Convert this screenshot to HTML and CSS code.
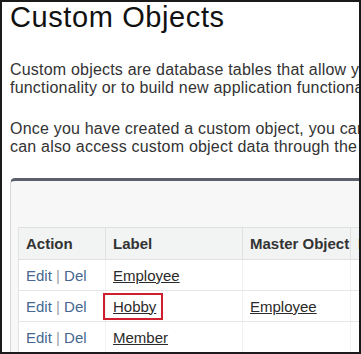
FILE: index.html
```html
<!DOCTYPE html>
<html lang="en">
<head>
  <meta charset="UTF-8">
  <title>Custom Objects</title>
  <link rel="stylesheet" href="styles.css">
</head>
<body>

  <!-- Page frame -->
  <div class="frame">
    <h1 class="page-title">Custom Objects</h1>

    <p class="intro">Custom objects are database tables that allow you to store information unique to your organization. Use them to extend existing<br>functionality or to build new application functionality.</p>
    <p class="intro intro-second">Once you have created a custom object, you can create a tab, custom fields and relationships for it. You<br>can also access custom object data through the API.</p>

    <!-- Object list -->
    <div class="list-box">
      <table class="list-table">
        <thead>
          <tr>
            <th class="col-action">Action</th>
            <th class="col-label">Label</th>
            <th class="col-master">Master Object</th>
            <th>Deployment Status</th>
          </tr>
        </thead>
        <tbody>
          <tr>
            <td><a href="#" class="action-link">Edit</a> <span class="sep">|</span> <a href="#" class="action-link">Del</a></td>
            <td><a href="#" class="obj-link">Employee</a></td>
            <td></td>
            <td></td>
          </tr>
          <tr>
            <td><a href="#" class="action-link">Edit</a> <span class="sep">|</span> <a href="#" class="action-link">Del</a></td>
            <td><span class="highlight"><a href="#" class="obj-link">Hobby</a></span></td>
            <td><a href="#" class="obj-link">Employee</a></td>
            <td></td>
          </tr>
          <tr>
            <td><a href="#" class="action-link">Edit</a> <span class="sep">|</span> <a href="#" class="action-link">Del</a></td>
            <td><a href="#" class="obj-link">Member</a></td>
            <td></td>
            <td></td>
          </tr>
        </tbody>
      </table>
    </div>
  </div>

</body>
</html>
```

FILE: styles.css
```css
/* Global */
body {
  margin: 0;
  padding: 0;
  font-family: "Liberation Sans", Arial, sans-serif;
  background-color: #fff;
}

/* Outer frame of the screenshot */
.frame {
  box-sizing: border-box;
  width: 361px;
  height: 354px;
  border: 2px solid #1a1a1a;
  padding-left: 8px;
  overflow: hidden;
}

.page-title {
  margin: 1px 0 0 0;
  font-size: 29px;
  line-height: 29px;
  font-weight: normal;
  letter-spacing: 0.6px;
  color: #111;
  white-space: nowrap;
}

.intro {
  margin: 29px 0 0 0;
  white-space: nowrap;
  font-size: 16px;
  line-height: 18px;
  letter-spacing: 0.2px;
  color: #333;
}

.intro-second {
  margin-top: 23px;
}

/* List box */
.list-box {
  margin-top: 22px;
  width: 600px;
  padding: 46px 0 0 7px;
  background-color: #f7f7f8;
  border-top: 3px solid #5b606a;
  border-left: 1px solid #d8d8d8;
  border-top-left-radius: 5px;
}

.list-table {
  border-collapse: collapse;
  background-color: #fff;
  border-left: 1px solid #e2e2e2;
  width: 593px;
}

.list-table th {
  height: 31px;
  padding: 0 0 0 7px;
  text-align: left;
  font-size: 15px;
  font-weight: bold;
  color: #333;
  background-color: #f2f3f3;
  border-top: 1px solid #e0e0e0;
  border-right: 1px solid #e0e0e0;
  border-bottom: 1px solid #e0e0e0;
}

.list-table td {
  height: 30px;
  padding: 0 0 0 7px;
  font-size: 15px;
  border-bottom: 1px solid #e6e6e6;
  border-right: 1px solid #f2f2f2;
}

.col-action { width: 79px; }
.col-label { width: 129px; }
.col-master { width: 100px; }

.action-link {
  color: #456790;
  text-decoration: none;
}

.sep {
  color: #9aa0a6;
}

.obj-link {
  color: #2b2b2b;
  text-decoration: underline;
}

/* Red annotation box */
.highlight {
  display: inline-block;
  margin-left: -10px;
  padding: 3px 5px 3px 8px;
  border: 2px solid #cf1f2e;
}
```
